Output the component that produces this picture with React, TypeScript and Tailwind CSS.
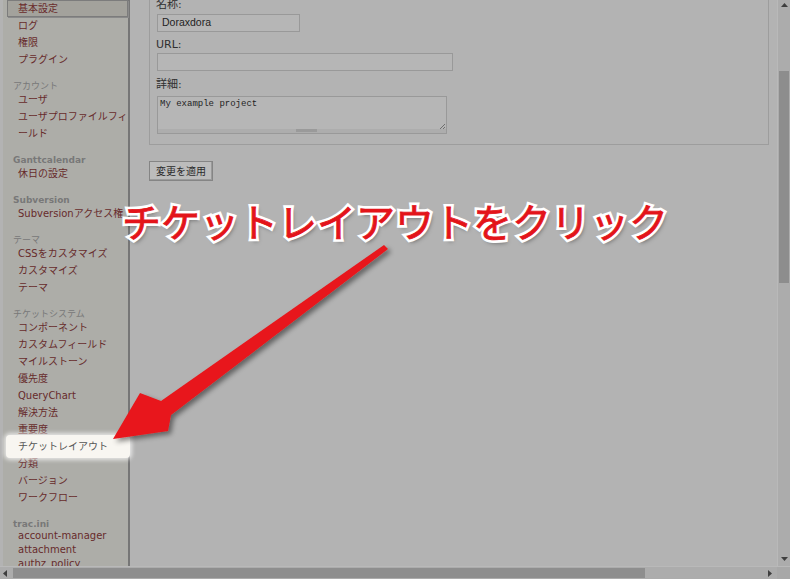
import React from "react";

type NavItem = { label: string; selected?: boolean; highlight?: boolean; latin?: boolean };
type NavGroup = { title?: string; bold?: boolean; items: NavItem[] };

const nav: NavGroup[] = [
  { items: [{ label: "基本設定", selected: true }, { label: "ログ" }, { label: "権限" }, { label: "プラグイン" }] },
  { title: "アカウント", items: [{ label: "ユーザ" }, { label: "ユーザプロファイルフィ\nールド" }] },
  { title: "Ganttcalendar", bold: true, items: [{ label: "休日の設定" }] },
  { title: "Subversion", bold: true, items: [{ label: "Subversionアクセス権" }] },
  { title: "テーマ", items: [{ label: "CSSをカスタマイズ" }, { label: "カスタマイズ" }, { label: "テーマ" }] },
  {
    title: "チケットシステム",
    items: [
      { label: "コンポーネント" },
      { label: "カスタムフィールド" },
      { label: "マイルストーン" },
      { label: "優先度" },
      { label: "QueryChart" },
      { label: "解決方法" },
      { label: "重要度" },
      { label: "チケットレイアウト", highlight: true },
      { label: "分類" },
      { label: "バージョン" },
      { label: "ワークフロー" },
    ],
  },
  {
    title: "trac.ini",
    bold: true,
    items: [
      { label: "account-manager", latin: true },
      { label: "attachment", latin: true },
      { label: "authz_policy", latin: true },
    ],
  },
];

function Sidebar() {
  return (
    <div className="ml-[3px] w-[127px] shrink-0 border-r-2 border-[#767676] bg-[#adada8] font-['DejaVu_Sans','Noto_Sans_CJK_JP',sans-serif] text-[10px]">
      {nav.map((group, gi) => (
        <div key={gi}>
          {group.title && (
            <div
              className={
                "mt-[13px] pl-[10px] text-[9px] leading-[10px] text-[#787878] " + (group.bold ? "font-bold" : "")
              }
            >
              {group.title}
            </div>
          )}
          {group.items.map((item) =>
            item.selected ? (
              <div
                key={item.label}
                className="ml-[4px] h-[17px] border border-[#7c7c7c] bg-[#a3a29c] pl-[10px] leading-[15px] text-[#6a2b2b] shadow-[1px_1px_0_#8a8a8a]"
              >
                {item.label}
              </div>
            ) : item.highlight ? (
              <div key={item.label} className="relative ml-[4px] pl-[11px] leading-[17px] text-[#555]">
                <span className="absolute -top-[3px] -bottom-[3px] -left-[1px] -right-[2px] rounded-[4px] bg-[#f8f6f1] shadow-[0_0_4px_2px_rgba(255,255,255,0.7)]" />
                <span className="relative">{item.label}</span>
              </div>
            ) : (
              <div
                key={item.label}
                className={
                  "ml-[4px] whitespace-pre pl-[11px] text-[#672b2b] " + (item.latin ? "leading-[14px]" : "leading-[17px]")
                }
              >
                {item.label}
              </div>
            )
          )}
        </div>
      ))}
    </div>
  );
}

function Field({ label, children, mt }: { label: string; children: React.ReactNode; mt: string }) {
  return (
    <>
      <div className={mt + " h-[14px] leading-[14px] text-[#2f2f2f]"}>{label}</div>
      {children}
    </>
  );
}

function Main() {
  return (
    <div className="flex-1 pl-[19px] font-['DejaVu_Sans','Noto_Sans_CJK_JP',sans-serif] text-[11px]">
      <div className="mt-[-12px] w-[620px] border border-[#9d9d9d] pb-[10px] pl-[6px] pt-[9px]">
        <Field label="名称:" mt="mt-0">
          <div className="ml-[1px] mt-[2px] flex h-[18px] w-[143px] items-center border border-[#999] bg-[#b6b6b6] pl-[4px] font-['Liberation_Sans',sans-serif] text-[10.5px] text-[#1f1f1f]">
            Doraxdora
          </div>
        </Field>
        <Field label="URL:" mt="mt-[6px]">
          <div className="ml-[1px] mt-[1px] h-[18px] w-[296px] border border-[#999] bg-[#b6b6b6]" />
        </Field>
        <Field label="詳細:" mt="mt-[7px]">
          <div className="relative ml-[1px] mt-[4px] flex h-[38px] w-[290px] flex-col border border-[#999] bg-[#b6b6b6]">
            <div className="flex-1 pl-[2px] pt-[1px] font-['Liberation_Mono',monospace] text-[9px] leading-[12px] text-[#1f1f1f]">
              My example project
            </div>
            <div className="flex h-[4px] justify-center bg-[#adadad]">
              <div className="ml-[8px] h-[3px] w-[21px] bg-[#9a9a9a]" />
            </div>
            <svg className="absolute bottom-[3px] right-0" width="8" height="8" viewBox="0 0 8 8">
              <path d="M7 2 L2 7 M7 5 L5 7" stroke="#6f6f6f" strokeWidth="1" />
            </svg>
          </div>
        </Field>
      </div>
      <div className="mt-[16px] flex h-[20px] w-[64px] items-center justify-center border border-[#858585] bg-[#bcbcbc] text-[10px] text-[#2b2b2b] shadow-[inset_-1px_-1px_0_#9a9a9a]">
        変更を適用
      </div>
    </div>
  );
}

function Annotation() {
  const text = "チケットレイアウトをクリック";
  return (
    <>
      <div className="absolute left-[122px] top-[201px] whitespace-nowrap font-['Noto_Sans_CJK_JP',sans-serif] text-[39px] font-normal leading-none">
        <span className="text-white [-webkit-text-stroke:6px_#fff] [text-shadow:2px_3px_4px_rgba(0,0,0,0.5)]">{text}</span>
        <span className="absolute inset-0 text-[#e3141a] [-webkit-text-stroke:0.8px_#e3141a]">{text}</span>
      </div>
      <svg className="pointer-events-none absolute left-0 top-0" width="777" height="566">
        <defs>
          <filter id="shadow" x="-20%" y="-20%" width="140%" height="140%">
            <feDropShadow dx="3" dy="3" stdDeviation="2.5" floodColor="#000" floodOpacity="0.45" />
          </filter>
        </defs>
        <path
          d="M113 439 L140 393 L161 401 L384 245 L388 249 L171 415 L168 431 Z"
          fill="#e8151a"
          filter="url(#shadow)"
        />
      </svg>
    </>
  );
}

function Arrow({ dir }: { dir: "up" | "down" | "left" | "right" }) {
  const d = {
    up: "M1 5 L4.5 1 L8 5 Z",
    down: "M1 2 L4.5 6 L8 2 Z",
    left: "M5 1 L1 4.5 L5 8 Z",
    right: "M2 1 L6 4.5 L2 8 Z",
  }[dir];
  return (
    <div className="flex h-[13px] w-[13px] shrink-0 items-center justify-center">
      <svg width="9" height="9" viewBox="0 0 9 9">
        <path d={d} fill="#3e3e3e" />
      </svg>
    </div>
  );
}

export default function App() {
  return (
    <div className="relative flex h-[579px] w-[790px] flex-col overflow-hidden bg-[#b3b3b3]">
      <div className="flex h-[566px] shrink-0 overflow-hidden">
        <div className="relative flex flex-1 overflow-hidden">
          <Sidebar />
          <Main />
          <Annotation />
        </div>
        <div className="flex w-[13px] shrink-0 flex-col border-l border-[#b9b9b9] bg-[#acacac]">
          <Arrow dir="up" />
          <div className="h-[58px]" />
          <div className="mx-[1px] h-[212px] bg-[#8d8d8d]" />
          <div className="flex-1" />
          <Arrow dir="down" />
        </div>
      </div>
      <div className="flex h-[13px] shrink-0 border-t border-[#b9b9b9] bg-[#acacac]">
        <Arrow dir="left" />
        <div className="my-[1px] w-[632px] bg-[#8e8e8e]" />
        <div className="flex-1" />
        <Arrow dir="right" />
        <div className="w-[13px] bg-[#a8a8a8]" />
      </div>
    </div>
  );
}
